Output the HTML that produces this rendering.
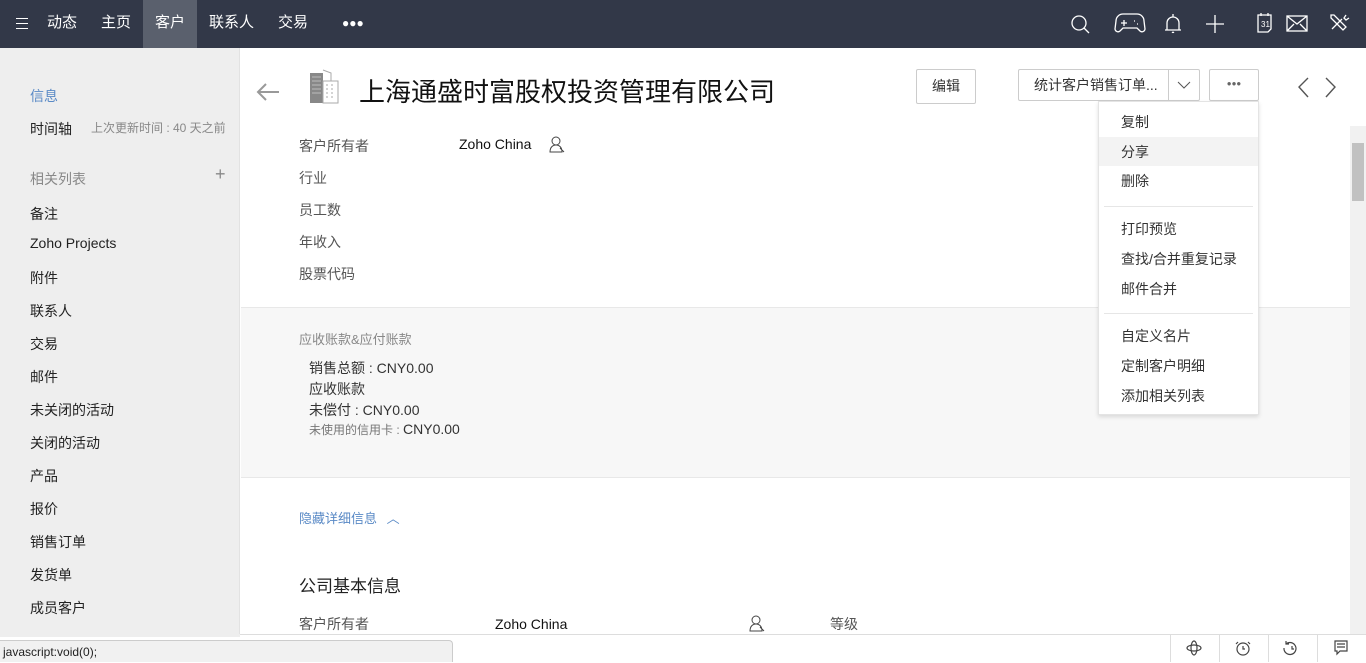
<!DOCTYPE html>
<html><head><meta charset="utf-8"><style>
*{margin:0;padding:0;box-sizing:border-box}
body{width:1366px;height:662px;overflow:hidden;font-family:"Liberation Sans","Noto Sans CJK SC",sans-serif;font-size:14px;color:#333;background:#fff;position:relative}
.nav{position:absolute;left:0;top:0;width:1366px;height:48px;background:#323848;color:#fff}
.nav .it{position:absolute;top:0;height:48px;line-height:46px;font-size:15px}
.side{position:absolute;left:0;top:48px;width:240px;height:586px;background:#eeeeee;border-right:1px solid #e2e2e2}
.side div{position:absolute;left:30px;font-size:14px;color:#222}
.a{position:absolute;white-space:nowrap}
.lbl{color:#555;font-size:14px}
.menu{position:absolute;left:1098px;top:101px;width:161px;height:314px;background:#fff;border:1px solid #e4e4e4;box-shadow:0 2px 4px rgba(0,0,0,.12)}
.menu div{position:absolute;left:22px;font-size:14px;color:#333}
.btn{position:absolute;border:1px solid #ccc;border-radius:2px;background:#fff}
</style></head><body>
<div class="nav">
 <div style="position:absolute;left:16px;top:18px;width:12px;height:11px;border-top:1.5px solid #fff;border-bottom:1.5px solid #fff"><div style="position:absolute;top:3.5px;left:0;width:12px;height:1.5px;background:#fff"></div></div>
 <div class="it" style="left:47px">动态</div>
 <div class="it" style="left:101px">主页</div>
 <div class="it" style="left:143px;width:54px;background:#5a606d;text-align:center">客户</div>
 <div class="it" style="left:209px">联系人</div>
 <div class="it" style="left:278px">交易</div>
 <div class="it" style="left:342px;font-size:12px;letter-spacing:0px">●●●</div>
 <svg style="position:absolute;left:1060px;top:10px" width="306" height="30" fill="none" stroke="#fff" stroke-width="1.3">
  <circle cx="19" cy="13" r="7"/><path d="M24 18 29 23"/>
  <path d="M63 4h14a7 7 0 0 1 7 7l1 8a3 3 0 0 1-5 2l-3-3h-14l-3 3a3 3 0 0 1-5-2l1-8a7 7 0 0 1 7-7z"/><path d="M64 10v6M61 13h6M74 11h1M77 14h1"/>
  <path d="M105 20h16M107 20v-7a6 6 0 0 1 12 0v7M112 22a1.5 1.5 0 0 0 2 0M113 4v3"/>
  <path d="M155 5v18M146 14h18"/>
  <path d="M198 5h13v14l-3 3h-10z"/><path d="M201 3v3M208 3v3"/><text x="201" y="17" font-size="8" fill="#fff" stroke="none">31</text>
  <rect x="227" y="6" width="20" height="15"/><path d="M227 6l10 8 10-8M227 21l7-7M247 21l-7-7"/>
  <path d="M271 5l3 0 12 12-3 3-12-12zM286 5l-2 3 2 2 3-2M272 19l10-10"/>
 </svg>
</div>
<div class="side">
 <div style="top:38px;color:#5a8ac6">信息</div>
 <div style="top:71px">时间轴</div>
 <div style="top:71px;left:91px;font-size:12px;color:#888">上次更新时间 : 40 天之前</div>
 <div style="top:121px;color:#888">相关列表</div>
 <div style="top:116px;left:215px;color:#888;font-size:18px">+</div>
 <div style="top:156px">备注</div>
 <div style="top:187px">Zoho Projects</div>
 <div style="top:220px">附件</div>
 <div style="top:253px">联系人</div>
 <div style="top:286px">交易</div>
 <div style="top:319px">邮件</div>
 <div style="top:352px">未关闭的活动</div>
 <div style="top:385px">关闭的活动</div>
 <div style="top:418px">产品</div>
 <div style="top:451px">报价</div>
 <div style="top:484px">销售订单</div>
 <div style="top:517px">发货单</div>
 <div style="top:550px">成员客户</div>
</div>
<svg class="a" style="left:255px;top:80px" width="26" height="24" fill="none" stroke="#999" stroke-width="2"><path d="M24 12H3M11 4l-8 8 8 8"/></svg>
<svg class="a" style="left:309px;top:69px" width="32" height="36"><rect x="1" y="4" width="13" height="30" fill="#888"/><path d="M3 8h9M3 12h9M3 16h9M3 20h9M3 24h9" stroke="#bbb"/><rect x="14" y="12" width="15" height="22" fill="none" stroke="#aaa"/><path d="M17 16h2M22 16h2M17 20h2M22 20h2M17 24h2M22 24h2M17 28h2M22 28h2" stroke="#aaa"/><path d="M14 1l8 3v8" stroke="#aaa" fill="none"/></svg>
<div class="a" style="left:359px;top:72px;font-size:26px;color:#111">上海通盛时富股权投资管理有限公司</div>
<div class="btn" style="left:916px;top:69px;width:60px;height:35px;line-height:33px;text-align:center;font-size:14px">编辑</div>
<div class="btn" style="left:1018px;top:69px;width:182px;height:32px;line-height:30px;font-size:14px;padding-left:15px">统计客户销售订单...<span style="position:absolute;left:149px;top:0;width:1px;height:30px;background:#ccc"></span><svg style="position:absolute;left:158px;top:11px" width="14" height="8" fill="none" stroke="#555"><path d="M1 1l6 6 6-6"/></svg></div>
<div class="btn" style="left:1209px;top:69px;width:50px;height:32px;line-height:28px;text-align:center;font-size:8px;color:#666">●●●</div>
<svg class="a" style="left:1295px;top:77px" width="48" height="22" fill="none" stroke="#555" stroke-width="1.4"><path d="M13 1 4 10l9 10M31 1l9 9-9 10"/></svg>
<div class="a lbl" style="left:299px;top:136px">客户所有者</div>
<div class="a" style="left:459px;top:136px;color:#111">Zoho China</div>
<svg class="a" style="left:549px;top:136px" width="16" height="18" fill="none" stroke="#444"><circle cx="7" cy="5" r="4"/><path d="M1 16c0-5 3-7 6-7s6 2 6 7zM11 12l4 4"/></svg>
<div class="a lbl" style="left:299px;top:168px">行业</div>
<div class="a lbl" style="left:299px;top:200px">员工数</div>
<div class="a lbl" style="left:299px;top:232px">年收入</div>
<div class="a lbl" style="left:299px;top:264px">股票代码</div>
<div class="a" style="left:241px;top:307px;width:1109px;height:171px;background:#f7f7f7;border-top:1px solid #e8e8e8;border-bottom:1px solid #e8e8e8"></div>
<div class="a" style="left:299px;top:329px;color:#888;font-size:13px">应收账款&amp;应付账款</div>
<div class="a" style="left:309px;top:358px;color:#333;font-size:14px">销售总额 : CNY0.00</div>
<div class="a" style="left:309px;top:379px;color:#333;font-size:14px">应收账款</div>
<div class="a" style="left:309px;top:400px;color:#333;font-size:14px">未偿付 : CNY0.00</div>
<div class="a" style="left:309px;top:421px;color:#777;font-size:12px">未使用的信用卡 : <span style="font-size:14px;color:#333">CNY0.00</span></div>
<div class="a" style="left:299px;top:508px;color:#5a8ac6;font-size:13px">隐藏详细信息 <span style="margin-left:6px">︿</span></div>
<div class="a" style="left:299px;top:572px;font-size:17px;color:#222">公司基本信息</div>
<div class="a lbl" style="left:299px;top:614px">客户所有者</div>
<div class="a" style="left:495px;top:616px;color:#111">Zoho China</div>
<svg class="a" style="left:749px;top:615px" width="16" height="18" fill="none" stroke="#444"><circle cx="7" cy="5" r="4"/><path d="M1 16c0-5 3-7 6-7s6 2 6 7zM11 12l4 4"/></svg>
<div class="a lbl" style="left:830px;top:614px">等级</div>
<div class="a" style="left:1350px;top:126px;width:16px;height:508px;background:#f1f1f1"><div style="position:absolute;left:2px;top:17px;width:12px;height:58px;background:#c1c1c1"></div></div>
<div class="menu">
 <div style="top:10px">复制</div>
 <div style="top:35px;left:0;width:159px;height:29px;background:#f3f3f3"></div>
 <div style="top:40px">分享</div>
 <div style="top:69px">删除</div>
 <div style="top:104px;left:5px;width:149px;height:1px;background:#e6e6e6"></div>
 <div style="top:117px">打印预览</div>
 <div style="top:147px">查找/合并重复记录</div>
 <div style="top:177px">邮件合并</div>
 <div style="top:211px;left:5px;width:149px;height:1px;background:#e6e6e6"></div>
 <div style="top:224px">自定义名片</div>
 <div style="top:254px">定制客户明细</div>
 <div style="top:284px">添加相关列表</div>
</div>
<div class="a" style="left:0;top:634px;width:1366px;height:28px;background:#fff;border-top:1px solid #ddd"></div>
<div class="a" style="left:0;top:634px;width:240px;height:3px;background:#eee"></div>
<div class="a" style="left:1170px;top:635px;width:1px;height:27px;background:#ddd"></div>
<div class="a" style="left:1219px;top:635px;width:1px;height:27px;background:#ddd"></div>
<div class="a" style="left:1268px;top:635px;width:1px;height:27px;background:#ddd"></div>
<div class="a" style="left:1317px;top:635px;width:1px;height:27px;background:#ddd"></div>
<svg class="a" style="left:1185px;top:639px" width="170" height="18" fill="none" stroke="#444" stroke-width="1.2"><ellipse cx="9" cy="9" rx="3" ry="7"/><ellipse cx="9" cy="9" rx="7" ry="3"/><circle cx="58" cy="10" r="6"/><path d="M58 7v3h2M53 3l-2 2M63 3l2 2"/><path d="M101 5a6 6 0 1 1-2 4M101 2v3h3M107 7v3h2"/><path d="M150 2h12v10h-7l-3 3v-3h-2zM152 5h8M152 8h8"/></svg>
<div class="a" style="left:0;top:640px;width:453px;height:22px;background:#f1f1f1;border:1px solid #ccc;border-left:none;border-bottom:none;border-radius:0 4px 0 0;font-size:12px;line-height:22px;padding-left:3px;color:#222">javascript:void(0);</div>
</body></html>
